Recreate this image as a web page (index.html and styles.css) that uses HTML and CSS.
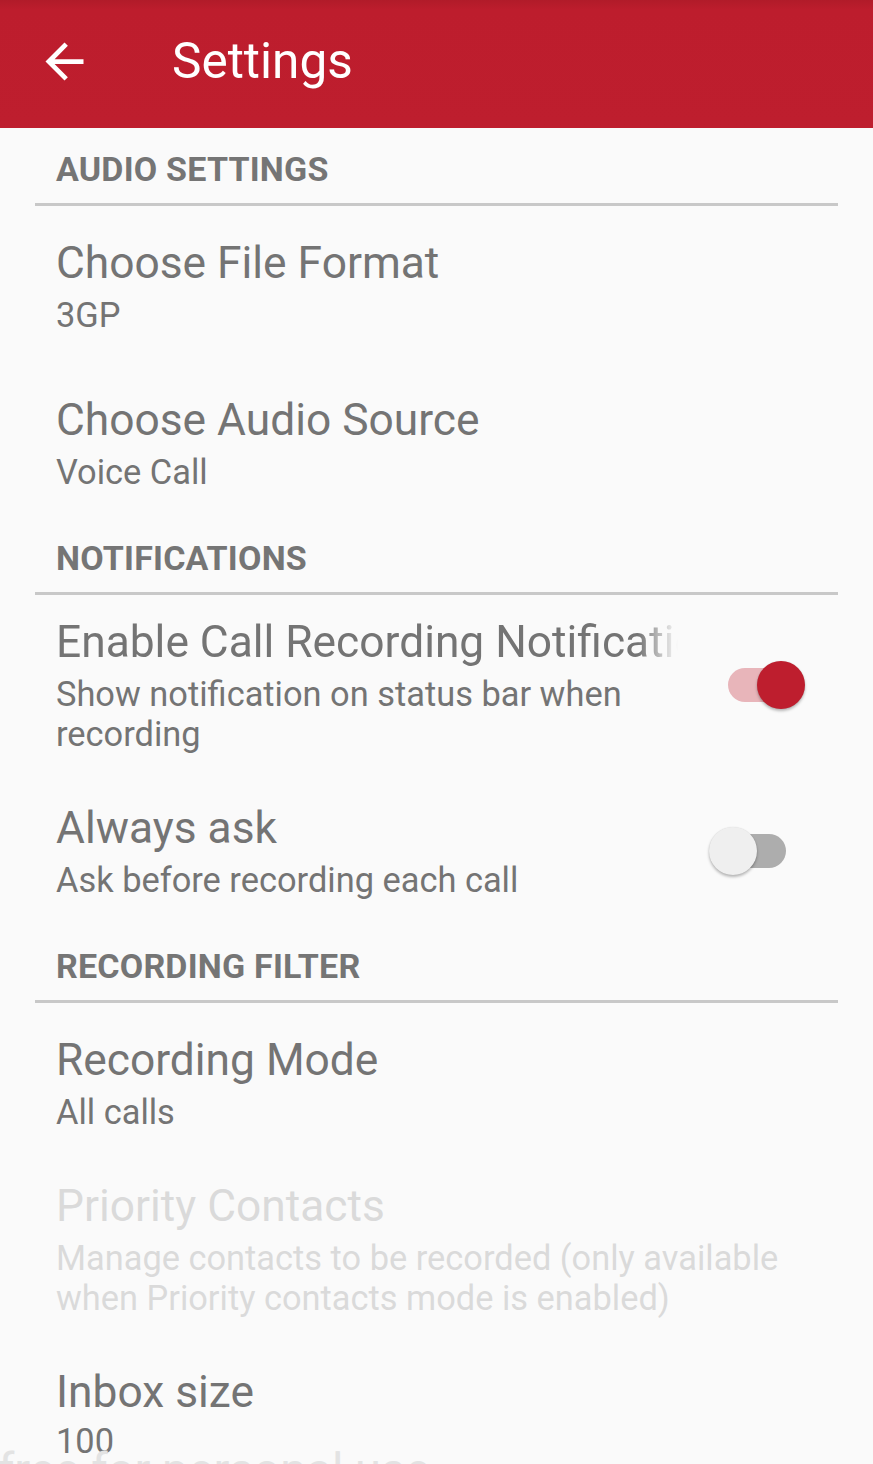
FILE: index.html
```html
<!DOCTYPE html>
<html lang="en">
<head>
<meta charset="utf-8">
<title>Settings</title>
<link rel="stylesheet" href="styles.css">
</head>
<body>
<div class="screen">
  <header class="appbar">
    <svg class="back" viewBox="0 0 24 24" aria-hidden="true"><path d="M20 11H7.83l5.59-5.59L12 4l-8 8 8 8 1.41-1.41L7.83 13H20v-2z"/></svg>
    <h1 class="appbar-title">Settings</h1>
  </header>

  <main class="list">
    <section class="category">
      <h2 class="category-title">AUDIO SETTINGS</h2>
      <div class="category-rule"></div>
    </section>
    <div class="item">
      <div class="item-text">
        <div class="item-title">Choose File Format</div>
        <div class="item-summary">3GP</div>
      </div>
    </div>
    <div class="item">
      <div class="item-text">
        <div class="item-title">Choose Audio Source</div>
        <div class="item-summary">Voice Call</div>
      </div>
    </div>

    <section class="category">
      <h2 class="category-title">NOTIFICATIONS</h2>
      <div class="category-rule"></div>
    </section>
    <div class="item item-switch item-first-switch">
      <div class="item-text">
        <div class="item-title item-title-fade">Enable Call Recording Notification</div>
        <div class="item-summary">Show notification on status bar when recording</div>
      </div>
      <div class="switch switch-on"><span class="track"></span><span class="thumb"></span></div>
    </div>
    <div class="item item-switch">
      <div class="item-text">
        <div class="item-title">Always ask</div>
        <div class="item-summary">Ask before recording each call</div>
      </div>
      <div class="switch"><span class="track"></span><span class="thumb"></span></div>
    </div>

    <section class="category">
      <h2 class="category-title">RECORDING FILTER</h2>
      <div class="category-rule"></div>
    </section>
    <div class="item item-tight">
      <div class="item-text">
        <div class="item-title">Recording Mode</div>
        <div class="item-summary">All calls</div>
      </div>
    </div>
    <div class="item item-tight item-disabled">
      <div class="item-text">
        <div class="item-title">Priority Contacts</div>
        <div class="item-summary">Manage contacts to be recorded (only available when Priority contacts mode is enabled)</div>
      </div>
    </div>
    <div class="item item-last">
      <div class="item-text">
        <div class="item-title">Inbox size</div>
        <div class="item-summary">100</div>
      </div>
    </div>
  </main>

  <div class="watermark">free for personal use</div>
</div>
</body>
</html>
```

FILE: styles.css
```css
* { box-sizing: border-box; }

html, body {
  margin: 0;
  padding: 0;
  background: #fafafa;
}

body {
  font-family: Roboto, "Noto Sans", "Liberation Sans", sans-serif;
  color: #757575;
}

.screen {
  position: relative;
  width: 873px;
  height: 1464px;
  overflow: hidden;
  background: #fafafa;
}

/* App bar */
.appbar {
  height: 128px;
  display: flex;
  align-items: center;
  padding: 0 0 6px 36px;
  background: linear-gradient(#b11b29 0, #bd1d2d 10px, #be1e2e 100%);
}

.back {
  width: 57px;
  height: 57px;
  fill: #ffffff;
  flex: none;
}

.appbar-title {
  margin: 0 0 0 79px;
  font-size: 49.5px;
  line-height: 57px;
  font-weight: 400;
  color: #ffffff;
}

/* List */
.list {
  padding-top: 3px;
}

.category {
  padding-top: 18px;
}

.category-title {
  margin: 0;
  padding-left: 56px;
  font-size: 34px;
  line-height: 40px;
  font-weight: 700;
  letter-spacing: 0.2px;
  color: #757575;
}

.category-rule {
  margin: 14px 35px 0;
  height: 3px;
  background: #c8c8c8;
}

.item {
  display: flex;
  align-items: center;
  padding: 31px 56px 28px 56px;
}

.item-tight {
  padding-bottom: 17px;
}

.item-switch {
  padding-right: 68px;
}

.item-first-switch {
  padding-top: 21px;
  padding-bottom: 17px;
}

.item-text {
  flex: 1;
  min-width: 0;
}

.item-title {
  font-size: 44.3px;
  line-height: 52px;
  color: #747474;
  white-space: nowrap;
  overflow: hidden;
}

.item-title-fade {
  -webkit-mask-image: linear-gradient(to right, #000 calc(100% - 40px), transparent 100%);
  mask-image: linear-gradient(to right, #000 calc(100% - 40px), transparent 100%);
}

.item-summary {
  margin-top: 6px;
  font-size: 34.4px;
  line-height: 40px;
  color: #747474;
}

.item-last .item-summary {
  margin-top: 3px;
}

.item-disabled .item-title,
.item-disabled .item-summary {
  color: #dadada;
}

/* Switch */
.switch {
  position: relative;
  flex: none;
  width: 96px;
  height: 48px;
  margin-left: 31px;
}

.switch .track {
  position: absolute;
  left: 19px;
  top: 7px;
  width: 58px;
  height: 34px;
  border-radius: 17px;
  background: #adadad;
}

.switch .thumb {
  position: absolute;
  left: 0;
  top: 0;
  width: 48px;
  height: 48px;
  border-radius: 50%;
  background: #efefef;
  box-shadow: 0 2px 3px rgba(0, 0, 0, 0.28), 0 0 1px rgba(0, 0, 0, 0.12);
}

.switch-on .track {
  background: #e8b5ba;
}

.switch-on .thumb {
  left: 48px;
  background: #be1e2e;
}

/* Watermark overlay */
.watermark {
  position: absolute;
  left: -2px;
  bottom: -30px;
  font-size: 47px;
  line-height: 48px;
  color: #e3e3e3;
  white-space: nowrap;
  pointer-events: none;
}
```
